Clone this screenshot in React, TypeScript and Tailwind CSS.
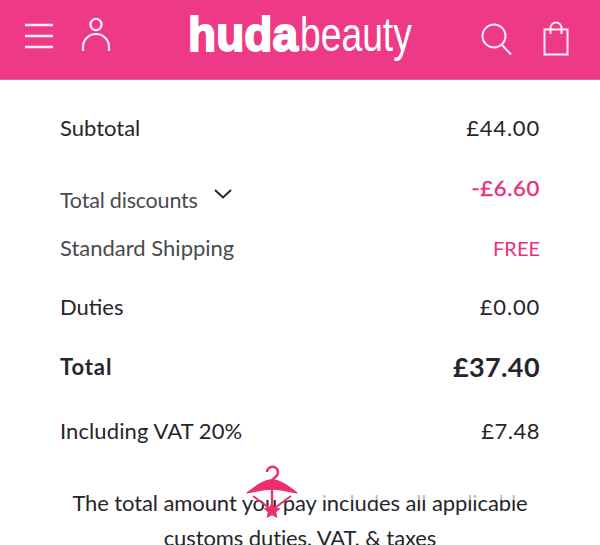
const font = { fontFamily: '"Lato", "Noto Sans", sans-serif' };

function Row({
  label,
  value,
  className = "",
  valueClass = "",
}: {
  label: React.ReactNode;
  value: string;
  className?: string;
  valueClass?: string;
}) {
  return (
    <div className={`flex justify-between ${className}`}>
      <div>{label}</div>
      <div className={valueClass}>{value}</div>
    </div>
  );
}

function Header() {
  return (
    <header className="flex h-[80px] items-center border-b border-[#e4659c] bg-[#ee3a86] text-white">
      <svg width="30" height="30" viewBox="0 0 30 30" className="ml-[24px] mb-[6px]" fill="none" stroke="#fdeef4" strokeWidth="2.4">
        <path d="M1 4h28M1 15h28M1 26h28" transform="translate(0 -1)" />
      </svg>
      <svg width="30" height="36" viewBox="0 0 30 36" className="ml-[27px] mb-[9px]" fill="none" stroke="#fdeef4" strokeWidth="2.2">
        <circle cx="15" cy="7.5" r="5.6" />
        <path d="M2 34v-4a13 13 0 0 1 26 0v4" />
      </svg>
      <div
        className="ml-[77px] mb-[11px] flex h-[50px] w-[224px] text-[49px] leading-[50px]"
        style={{ fontFamily: '"Liberation Sans", sans-serif' }}
      >
        <span className="w-[112px] origin-left scale-x-[0.94] font-bold [-webkit-text-stroke:1.8px_white]">huda</span>
        <span className="w-[112px] origin-left scale-x-[0.76]">beauty</span>
      </div>
      <svg width="32" height="34" viewBox="0 0 32 34" className="ml-auto mb-[1px]" fill="none" stroke="#fdeef4" strokeWidth="2">
        <circle cx="14" cy="14" r="11.5" />
        <path d="M22 23l9 9.5" />
      </svg>
      <svg width="26" height="36" viewBox="0 0 26 36" className="ml-[31px] mr-[31px] mb-[1px]" fill="none" stroke="#fdeef4" strokeWidth="2">
        <path d="M1.5 8.5h23v25h-23z" />
        <path d="M7.5 13V7a5.5 5.5 0 0 1 11 0v6" />
      </svg>
    </header>
  );
}

function Hanger() {
  return (
    <svg width="56" height="56" viewBox="0 0 56 56" className="absolute left-[245px] top-[463px]" fill="none" stroke="#ee2f6f">
      <path d="M22 9a5.500 5.500 0 1 1 9 4.500L27 17v3" strokeWidth="2.400" />
      <path d="M2 30C10 24 19 17 27 17s17 7 25 13C43 28 35 26 27 26S11 28 2 30z" fill="#ee2f6f" strokeWidth="1.400" />
      <path d="M27 24v22" strokeWidth="2.400" />
      <path d="M8 33l19 14 19-14" strokeWidth="2" />
      <path d="M27 39l2.800 5.500 5.700.800-4.200 4 1 5.700-5.300-2.700-5.300 2.700 1-5.700-4.200-4 5.700-.800z" fill="#ee2f6f" stroke="none" />
    </svg>
  );
}

export default function App() {
  return (
    <div className="relative h-[545px] w-[600px] overflow-hidden bg-white text-[#26262a]" style={font}>
      <Header />
      <div className="px-[60px] text-[22px] leading-[28px]">
        <Row label="Subtotal" value="£44.00" className="mt-[34px]" valueClass="tracking-[0.8px]" />
        <div className="mt-[32px] flex justify-between">
          <div className="mt-[12px] flex items-start text-[21.500px] text-[#4a4a4e] tracking-[-0.2px]">
            Total discounts
            <svg width="18" height="10" viewBox="0 0 18 10" className="ml-[16px] mt-[3px]" fill="none" stroke="#26262a" strokeWidth="2">
              <path d="M1 1l8 7.500 8-7.500" />
            </svg>
          </div>
          <div className="tracking-[0.7px] text-[#e6307f] [-webkit-text-stroke:0.4px_#e6307f]">-£6.60</div>
        </div>
        <Row
          label="Standard Shipping"
          value="FREE"
          className="mt-[20px] text-[#4a4a4e]"
          valueClass="text-[#e6307f] text-[20px]"
        />
        <Row label="Duties" value="£0.00" className="mt-[31px]" valueClass="tracking-[0.8px]" />
        <Row
          label={<span className="tracking-[0.9px]">Total</span>}
          value="£37.40"
          className="mt-[32px] font-bold"
          valueClass="text-[27px] tracking-[0.4px]"
        />
        <Row label={<span className="tracking-[0.1px]">Including VAT 20%</span>} value="£7.48" className="mt-[36px]" valueClass="tracking-[0.5px]" />
      </div>
      <p className="mt-[40px] px-[60px] text-center text-[22px] leading-[35px] tracking-[-0.1px]">
        The total amount you pay includes all applicable customs duties, VAT, &amp; taxes
      </p>
      {/* washed out strip across the right part of the line, as in the reference */}
      <div className="absolute left-[305px] top-[495px] h-[5px] w-[225px] bg-white/70" />
      <Hanger />
    </div>
  );
}
